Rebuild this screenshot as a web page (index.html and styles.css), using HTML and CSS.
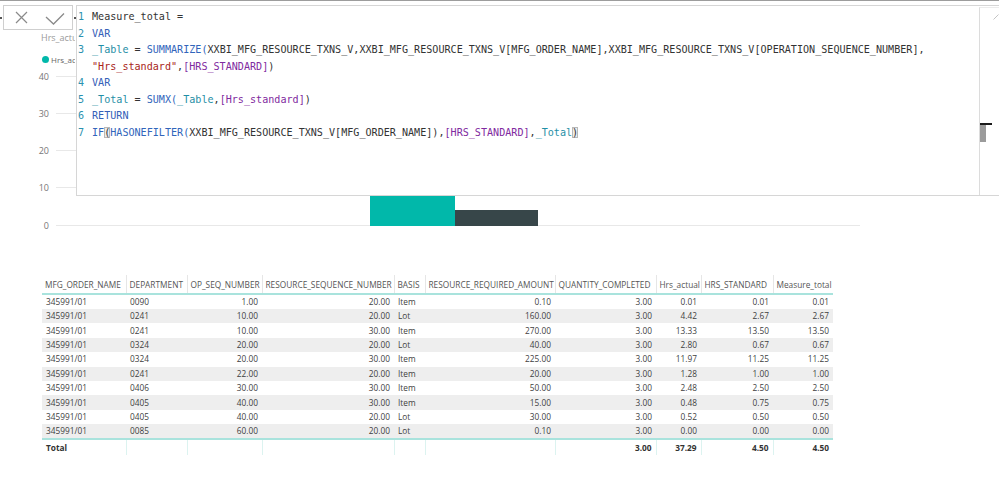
FILE: index.html
```html
<!DOCTYPE html>
<html>
<head>
<meta charset="utf-8">
<link rel="stylesheet" href="styles.css">
</head>
<body>
<div class="page">
  <div class="topline"></div>

  <section class="chart">
    <div class="chart-title"><span class="clip">Hrs_actual and HRS_STANDARD</span></div>
    <div class="legend"><span class="dot"></span><span class="clip legend-text">Hrs_actual</span></div>
    <div class="plot">
      <div class="axis">
        <div class="tick"><span class="lbl">40</span><span class="grid"></span></div>
        <div class="tick"><span class="lbl">30</span><span class="grid"></span></div>
        <div class="tick"><span class="lbl">20</span><span class="grid"></span></div>
        <div class="tick"><span class="lbl">10</span><span class="grid"></span></div>
        <div class="tick"><span class="lbl">0</span><span class="grid"></span></div>
      </div>
      <div class="bars">
        <div class="bar bar-actual" style="height:139px"></div>
        <div class="bar bar-standard" style="height:16px"></div>
      </div>
    </div>
  </section>

  <section class="table-wrap">
    <table class="matrix">
      <colgroup>
        <col class="c1"><col class="c2"><col class="c3"><col class="c4"><col class="c5">
        <col class="c6"><col class="c7"><col class="c8"><col class="c9"><col class="c10">
      </colgroup>
      <thead>
        <tr>
          <th>MFG_ORDER_NAME</th><th>DEPARTMENT</th><th>OP_SEQ_NUMBER</th><th>RESOURCE_SEQUENCE_NUMBER</th><th>BASIS</th>
          <th>RESOURCE_REQUIRED_AMOUNT</th><th>QUANTITY_COMPLETED</th><th>Hrs_actual</th><th>HRS_STANDARD</th><th>Measure_total</th>
        </tr>
      </thead>
      <tbody>
        <tr><td>345991/01</td><td>0090</td><td class="n">1.00</td><td class="n">20.00</td><td>Item</td><td class="n">0.10</td><td class="n">3.00</td><td class="n">0.01</td><td class="n">0.01</td><td class="n">0.01</td></tr>
        <tr><td>345991/01</td><td>0241</td><td class="n">10.00</td><td class="n">20.00</td><td>Lot</td><td class="n">160.00</td><td class="n">3.00</td><td class="n">4.42</td><td class="n">2.67</td><td class="n">2.67</td></tr>
        <tr><td>345991/01</td><td>0241</td><td class="n">10.00</td><td class="n">30.00</td><td>Item</td><td class="n">270.00</td><td class="n">3.00</td><td class="n">13.33</td><td class="n">13.50</td><td class="n">13.50</td></tr>
        <tr><td>345991/01</td><td>0324</td><td class="n">20.00</td><td class="n">20.00</td><td>Lot</td><td class="n">40.00</td><td class="n">3.00</td><td class="n">2.80</td><td class="n">0.67</td><td class="n">0.67</td></tr>
        <tr><td>345991/01</td><td>0324</td><td class="n">20.00</td><td class="n">30.00</td><td>Item</td><td class="n">225.00</td><td class="n">3.00</td><td class="n">11.97</td><td class="n">11.25</td><td class="n">11.25</td></tr>
        <tr><td>345991/01</td><td>0241</td><td class="n">22.00</td><td class="n">20.00</td><td>Item</td><td class="n">20.00</td><td class="n">3.00</td><td class="n">1.28</td><td class="n">1.00</td><td class="n">1.00</td></tr>
        <tr><td>345991/01</td><td>0406</td><td class="n">30.00</td><td class="n">30.00</td><td>Item</td><td class="n">50.00</td><td class="n">3.00</td><td class="n">2.48</td><td class="n">2.50</td><td class="n">2.50</td></tr>
        <tr><td>345991/01</td><td>0405</td><td class="n">40.00</td><td class="n">30.00</td><td>Item</td><td class="n">15.00</td><td class="n">3.00</td><td class="n">0.48</td><td class="n">0.75</td><td class="n">0.75</td></tr>
        <tr><td>345991/01</td><td>0405</td><td class="n">40.00</td><td class="n">20.00</td><td>Lot</td><td class="n">30.00</td><td class="n">3.00</td><td class="n">0.52</td><td class="n">0.50</td><td class="n">0.50</td></tr>
        <tr><td>345991/01</td><td>0085</td><td class="n">60.00</td><td class="n">20.00</td><td>Lot</td><td class="n">0.10</td><td class="n">3.00</td><td class="n">0.00</td><td class="n">0.00</td><td class="n">0.00</td></tr>
      </tbody>
      <tfoot>
        <tr><td>Total</td><td></td><td></td><td></td><td></td><td></td><td class="n">3.00</td><td class="n">37.29</td><td class="n">4.50</td><td class="n">4.50</td></tr>
      </tfoot>
    </table>
  </section>

  <div class="formula-controls">
    <span class="grip-dot"></span>
    <div class="fx-box">
      <svg class="fx-icons" width="70" height="25" viewBox="0 0 70 25">
        <path d="M13 7 L24 18 M24 7 L13 18" stroke="#8a8a8a" stroke-width="1.2" fill="none"/>
        <path d="M43 12 L50.5 19 L61 8.5" stroke="#8a8a8a" stroke-width="1.3" fill="none"/>
      </svg>
    </div>
    <span class="grip-dot"></span>
  </div>

  <div class="editor">
    <div class="code"><span class="ln">1</span><span class="src">Measure_total =</span><span class="ln">2</span><span class="src"><span class="kw">VAR</span></span><span class="ln">3</span><span class="src"><span class="var">_Table</span> = <span class="fn">SUMMARIZE(</span>XXBI_MFG_RESOURCE_TXNS_V,XXBI_MFG_RESOURCE_TXNS_V[MFG_ORDER_NAME],XXBI_MFG_RESOURCE_TXNS_V[OPERATION_SEQUENCE_NUMBER],</span><span class="ln"></span><span class="src"><span class="str">"Hrs_standard"</span>,<span class="col">[HRS_STANDARD]</span>)</span><span class="ln">4</span><span class="src"><span class="kw">VAR</span></span><span class="ln">5</span><span class="src"><span class="var">_Total</span> = <span class="fn">SUMX(</span><span class="var">_Table</span>,<span class="col">[Hrs_standard]</span>)</span><span class="ln">6</span><span class="src"><span class="kw">RETURN</span></span><span class="ln">7</span><span class="src"><span class="fn">IF</span><span class="match">(</span><span class="fn">HASONEFILTER(</span>XXBI_MFG_RESOURCE_TXNS_V[MFG_ORDER_NAME]),<span class="col">[HRS_STANDARD]</span>,<span class="var">_Total</span><span class="match">)</span></span></div>
    <div class="vscroll">
      <svg class="resize" width="6" height="6" viewBox="0 0 6 6"><path d="M0.5 5.5 L5.5 0.5" stroke="#c4c4c4" stroke-width="1"/></svg>
      <div class="thumb"></div>
    </div>
  </div>
</div>
</body>
</html>
```

FILE: styles.css
```css
* { box-sizing: border-box; }

html, body {
  margin: 0;
  padding: 0;
  background: #ffffff;
}

body {
  font-family: "Open Sans", "Noto Sans", sans-serif;
  color: #444;
}

.page {
  position: relative;
  width: 999px;
  height: 481px;
  overflow: hidden;
}

.topline {
  height: 1px;
  background: #9d9d9d;
}

/* ---------- chart ---------- */
.chart {
  padding-top: 31px;
}

.chart-title {
  padding-left: 41px;
  height: 12px;
  line-height: 12px;
  font-size: 9px;
  color: #9a9a9a;
  white-space: nowrap;
}

.clip {
  display: inline-block;
  max-width: 34px;
  overflow: hidden;
  white-space: nowrap;
  vertical-align: top;
}

.legend-text {
  max-width: 24px;
}

.legend {
  margin-top: 9px;
  padding-left: 42px;
  height: 12px;
  display: flex;
  align-items: center;
  gap: 2px;
  font-size: 8px;
  color: #666;
  white-space: nowrap;
}

.dot {
  width: 7px;
  height: 7px;
  border-radius: 50%;
  background: #01b8aa;
}

.plot {
  margin-top: 5px;
  display: grid;
}

.plot > * {
  grid-area: 1 / 1;
}

.axis {
  display: flex;
  flex-direction: column;
  gap: 25.25px;
}

.tick {
  height: 12px;
  display: flex;
  align-items: center;
}

.lbl {
  width: 50px;
  text-align: right;
  font-size: 9px;
  color: #777;
  padding-right: 1px;
}

.grid {
  margin-left: 6px;
  width: 804px;
  height: 1px;
  background: #e8e8e8;
}

.bars {
  align-self: end;
  margin-bottom: 5.5px;
  margin-left: 370px;
  display: flex;
  align-items: flex-end;
}

.bar-actual {
  width: 85px;
  background: #01b8aa;
}

.bar-standard {
  width: 83px;
  background: #374649;
}

/* ---------- table ---------- */
.table-wrap {
  margin-top: 44px;
  padding-left: 42px;
}

.matrix {
  border-collapse: collapse;
  table-layout: fixed;
  width: 791px;
  font-size: 8.3px;
  color: #3f3f3f;
}

.c1 { width: 84px; }
.c2 { width: 61px; }
.c3 { width: 75px; }
.c4 { width: 132px; }
.c5 { width: 31px; }
.c6 { width: 130px; }
.c7 { width: 101px; }
.c8 { width: 45px; }
.c9 { width: 72px; }
.c10 { width: 60px; }

.matrix th {
  height: 19px;
  padding: 0 3px;
  font-weight: normal;
  color: #555;
  text-align: left;
  white-space: nowrap;
  overflow: hidden;
  border-left: 1px solid #e6e6e6;
  border-bottom: 2px solid #a9e3dd;
}

.matrix th:first-child {
  border-left: none;
}

.matrix td {
  height: 14.4px;
  padding: 0 4px;
  white-space: nowrap;
  overflow: hidden;
  line-height: 14px;
}

.matrix td.n {
  text-align: right;
}

.matrix tbody tr:nth-child(even) td {
  background: #eeeeee;
}

.matrix tfoot td {
  border-top: 2px solid #a9e3dd;
  border-left: 1px solid #dcf3f0;
  font-weight: bold;
  color: #333;
  height: 16px;
}

.matrix tfoot td:first-child {
  border-left: none;
}

/* ---------- formula bar overlay ---------- */
.formula-controls {
  position: absolute;
  left: 0;
  top: 5px;
  display: flex;
  align-items: center;
  gap: 1px;
}

.grip-dot {
  width: 2px;
  height: 2px;
  background: #555;
}

.fx-box {
  width: 70px;
  height: 25px;
  border: 1px solid #cfcfcf;
  background: #fff;
}

.fx-icons {
  display: block;
  margin: -1px;
}

.editor {
  position: absolute;
  left: 76px;
  top: 5px;
  width: 923px;
  height: 191px;
  display: flex;
  background: #fff;
  border: 1px solid #d6d6d6;
  border-right: none;
}

.code {
  flex: 1;
  padding: 3px 0 0 1px;
  display: grid;
  grid-template-columns: 14px auto;
  align-content: start;
  font-family: "DejaVu Sans Mono", "Liberation Mono", monospace;
  font-size: 10.1px;
  line-height: 16.5px;
  color: #333;
}

.src {
  white-space: pre;
}

.ln { color: #2b91af; }
.kw { color: #3560b8; }
.fn { color: #3165bb; }
.var { color: #1f8fa6; }
.str { color: #a8251a; }
.col { color: #7f2aa0; }

.match {
  background: #ececec;
  box-shadow: inset 0 0 0 1px #b8b8b8;
}

.vscroll {
  position: relative;
  width: 20px;
  border-left: 1px solid #dcdcdc;
  margin-top: 1px;
  border-top: 1px solid #ececec;
}

.resize {
  position: absolute;
  right: 0;
  top: 6px;
}

.thumb {
  position: absolute;
  left: 0;
  top: 116px;
  width: 6px;
  height: 18px;
  background: #9b9b9b;
}

.thumb::before {
  content: "";
  position: absolute;
  left: 0;
  top: -1px;
  width: 12px;
  height: 2px;
  background: #1a1a1a;
}
```
